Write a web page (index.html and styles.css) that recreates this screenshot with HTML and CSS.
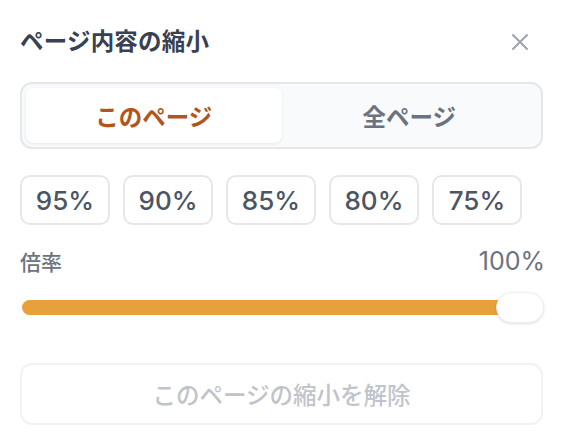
FILE: index.html
```html
<!DOCTYPE html>
<html lang="ja">
<head>
<meta charset="utf-8">
<title>ページ内容の縮小</title>
<link rel="stylesheet" href="styles.css">
</head>
<body>
<div class="panel">
  <div class="header">
    <h1 class="title">ページ内容の縮小</h1>
    <button class="close" aria-label="閉じる">
      <svg width="18" height="18" viewBox="0 0 18 18"><path d="M2 2 L16 16 M16 2 L2 16" stroke="#9ca3af" stroke-width="2" stroke-linecap="round" fill="none"/></svg>
    </button>
  </div>
  <div class="segment">
    <div class="seg active">このページ</div>
    <div class="seg">全ページ</div>
  </div>
  <div class="presets">
    <div class="preset">95%</div>
    <div class="preset">90%</div>
    <div class="preset">85%</div>
    <div class="preset">80%</div>
    <div class="preset">75%</div>
  </div>
  <div class="rate-row">
    <span class="rate-label">倍率</span>
    <span class="rate-value">100%</span>
  </div>
  <div class="slider">
    <div class="track"></div>
    <div class="thumb"></div>
  </div>
  <button class="reset">このページの縮小を解除</button>
</div>
</body>
</html>
```
FILE: styles.css
```css
* { box-sizing: border-box; }
html, body { margin: 0; padding: 0; background: #ffffff; }
body {
  font-family: "Inter", "Noto Sans CJK JP", "Noto Sans", sans-serif;
  width: 566px;
  height: 446px;
  overflow: hidden;
}
.panel {
  padding: 24px 23px 0 20px;
  display: flex;
  flex-direction: column;
}
.header {
  display: flex;
  align-items: center;
  justify-content: space-between;
  height: 36px;
}
.title {
  margin: 0;
  font-size: 23.5px;
  font-weight: 700;
  color: #374151;
  line-height: 36px;
  letter-spacing: 0.2px;
}
.close {
  border: 0;
  background: none;
  padding: 0;
  margin-right: 14px;
  width: 18px;
  height: 18px;
  display: flex;
}
.segment {
  margin-top: 22px;
  height: 67px;
  border: 2px solid #e5e7eb;
  background: #f9fafb;
  border-radius: 12px;
  padding: 4px;
  display: grid;
  grid-template-columns: 1fr 1fr;
}
.seg {
  display: flex;
  align-items: center;
  justify-content: center;
  font-size: 23.5px;
  font-weight: 700;
  color: #6b7280;
  border-radius: 8px;
}
.seg.active {
  background: #ffffff;
  color: #b0561c;
  box-shadow: 0 1px 3px rgba(0, 0, 0, 0.08);
}
.presets {
  margin-top: 26px;
  display: flex;
  gap: 13px;
}
.preset {
  width: 90px;
  height: 50px;
  border: 2px solid #e5e7eb;
  border-radius: 10px;
  display: flex;
  align-items: center;
  justify-content: center;
  font-size: 26px;
  font-weight: 500;
  color: #4b5563;
}
.rate-row {
  margin-top: 21px;
  display: flex;
  justify-content: space-between;
  align-items: center;
  height: 30px;
  color: #6b7280;
}
.rate-label { font-size: 21px; font-weight: 500; }
.rate-value { font-size: 25px; font-weight: 400; margin-right: -2px; }
.slider {
  margin-top: 16px;
  position: relative;
  height: 31px;
  display: flex;
  align-items: center;
}
.track {
  margin-left: 2px;
  width: 500px;
  height: 15px;
  border-radius: 8px;
  background: #e8a03a;
}
.thumb {
  position: absolute;
  right: -1px;
  top: 0;
  width: 48px;
  height: 31px;
  border-radius: 16px;
  background: #ffffff;
  border: 1px solid #eceef1;
  box-shadow: 0 1px 3px rgba(0, 0, 0, 0.12);
}
.reset {
  margin-top: 40px;
  height: 62px;
  width: 100%;
  border: 2px solid #f1f2f4;
  border-radius: 12px;
  background: #ffffff;
  font-family: inherit;
  font-size: 23.5px;
  font-weight: 500;
  color: #c0c4ca;
}
```
